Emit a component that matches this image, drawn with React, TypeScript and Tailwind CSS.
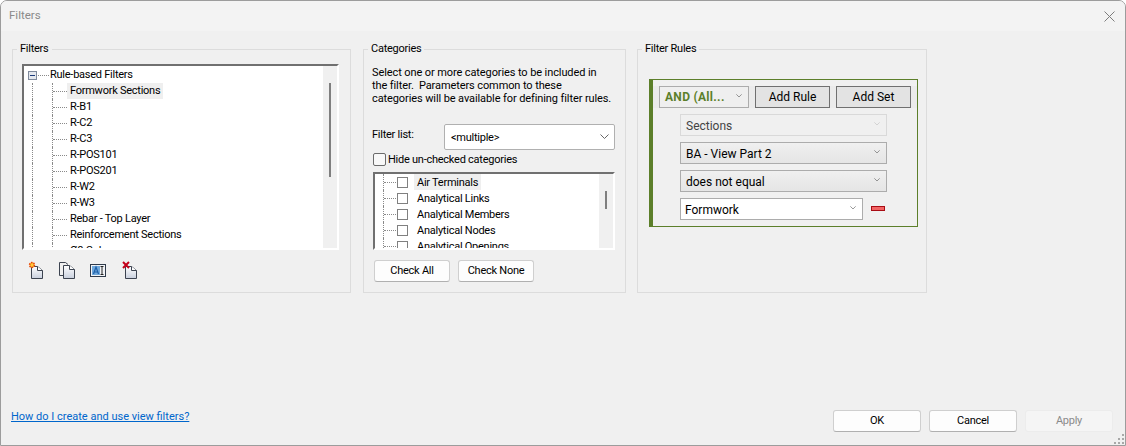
import React from "react";

const FILTERS = ["Formwork Sections", "R-B1", "R-C2", "R-C3", "R-POS101", "R-POS201", "R-W2", "R-W3", "Rebar - Top Layer", "Reinforcement Sections", "Ø8 Colour"];
const CATEGORIES = ["Air Terminals", "Analytical Links", "Analytical Members", "Analytical Nodes", "Analytical Openings"];

function Chevron({ className = "" }: { className?: string }) {
  return (
    <svg viewBox="0 0 9 6" className={className} fill="none" stroke="currentColor">
      <path d="M0.5 0.5 L4.5 4.5 L8.5 0.5" />
    </svg>
  );
}

function Group({ title, className, children }: { title: string; className: string; children: React.ReactNode }) {
  return (
    <fieldset className={`border border-[#dcdcdc] h-[252px] shrink-0 ${className}`}>
      <legend className="ml-[4px] px-[3px] h-4 leading-4">{title}</legend>
      {children}
    </fieldset>
  );
}

function FilterRow({ label, selected }: { label: string; selected?: boolean }) {
  return (
    <div className="flex h-4 shrink-0 pl-[8px]">
      <span className="w-[20px] border-l border-dotted border-[#8a8a8a]" />
      <span className="w-[15px] h-4 border-l border-dotted border-[#8a8a8a] flex items-center">
        <span className="w-[14px] border-t border-dotted border-[#8a8a8a]" />
      </span>
      <span className={`px-[3px] h-4 leading-4 ${selected ? "bg-[#efefef]" : ""}`}>{label}</span>
    </div>
  );
}

function CategoryRow({ label, selected }: { label: string; selected?: boolean }) {
  return (
    <div className="flex h-4 shrink-0 items-center pl-[8px]">
      <span className="h-4 w-[14px] border-l border-dotted border-[#8a8a8a] flex items-center">
        <span className="w-[12px] border-t border-dotted border-[#8a8a8a]" />
      </span>
      <span className="w-[11px] h-[11px] border border-[#808080] bg-white shrink-0" />
      <span className={`ml-[6px] px-[3px] h-4 pt-px leading-4 ${selected ? "bg-[#efefef]" : ""}`}>{label}</span>
    </div>
  );
}

function RuleSelect({ label, disabled }: { label: string; disabled?: boolean }) {
  return (
    <div
      className={`w-[207px] h-[22px] flex items-center justify-between pl-[5px] pr-[6px] border ${
        disabled
          ? "border-[#d9d9d9] text-[#444]"
          : "border-[#acacac] bg-gradient-to-b from-[#f0f0f0] to-[#e5e5e5]"
      }`}
    >
      <span className="pt-[2px]">{label}</span>
      <Chevron className={`w-[6px] h-[4px] mb-[3px] ${disabled ? "text-[#c4c4c4]" : "text-[#666]"}`} />
    </div>
  );
}

function DialogButton({ label, disabled }: { label: string; disabled?: boolean }) {
  return (
    <button
      className={`w-[88px] h-[22px] rounded-[3px] border ${
        disabled ? "border-[#ececec] bg-[#f5f5f5] text-[#8a8a8a]" : "border-[#cfcfcf] border-b-[#b0b0b0] bg-[#fdfdfd]"
      }`}
    >
      {label}
    </button>
  );
}

function PageGradient({ id }: { id: string }) {
  return (
    <defs>
      <linearGradient id={id} x1="0" y1="0" x2="0" y2="1">
        <stop offset="0" stopColor="#ffffff" />
        <stop offset="1" stopColor="#c9d0de" />
      </linearGradient>
    </defs>
  );
}

function NewIcon() {
  return (
    <svg width="16" height="18" viewBox="0 0 16 18">
      <PageGradient id="pg1" />
      <path d="M3.5 5.5 H9.5 L14.5 9.5 V17.5 H3.5 Z" fill="url(#pg1)" stroke="#3c4350" />
      <path d="M9.5 5.5 V9.5 H14.5" fill="#fff" stroke="#3c4350" />
      <circle cx="4" cy="4" r="2.4" fill="#ffc93a" stroke="#ea4a0a" strokeWidth="1.6" strokeDasharray="1.5 0.8" />
    </svg>
  );
}

function CopyIcon() {
  return (
    <svg width="17" height="18" viewBox="0 0 17 18">
      <PageGradient id="pg2" />
      <path d="M5.5 14.5 H1.5 V1.5 H7.5 L10 3.5" fill="none" stroke="#3c4350" />
      <path d="M5.5 4.5 H11.5 L16.5 8.5 V17.5 H5.5 Z" fill="url(#pg2)" stroke="#3c4350" />
      <path d="M11.5 4.5 V8.5 H16.5" fill="#fff" stroke="#3c4350" />
    </svg>
  );
}

function RenameIcon() {
  return (
    <svg width="16" height="13" viewBox="0 0 16 13">
      <rect x="0.5" y="0.5" width="15" height="12" fill="#f2f4f7" stroke="#2f3a4a" />
      <rect x="2" y="2" width="8" height="9" fill="#6fa8dc" />
      <path d="M3.5 10 L6 3 L8.5 10 M4.5 8 H7.5" fill="none" stroke="#1d5fa8" strokeWidth="1.2" />
      <path d="M10.5 2.5 H13.5 M12 2.5 V10.5 M10.5 10.5 H13.5" fill="none" stroke="#222" />
    </svg>
  );
}

function DeleteIcon() {
  return (
    <svg width="16" height="18" viewBox="0 0 16 18">
      <PageGradient id="pg3" />
      <path d="M3.5 5.5 H9.5 L14.5 9.5 V17.5 H3.5 Z" fill="url(#pg3)" stroke="#3c4350" />
      <path d="M9.5 5.5 V9.5 H14.5" fill="#fff" stroke="#3c4350" />
      <path d="M1 1 L7 7 M7 1 L1 7" stroke="#c4001a" strokeWidth="2" />
    </svg>
  );
}

export default function App() {
  return (
    <div className="relative w-[1126px] h-[446px] flex flex-col overflow-hidden bg-[#f0f0f0] border border-[#9c9c9c] rounded-t-[7px] text-[11px] text-black font-['Roboto',sans-serif] tracking-[-0.25px]">
      <div className="h-[30px] shrink-0 bg-[#f3f3f3] flex items-center justify-between pl-[8px] pr-[10px]">
        <span className="text-[#8a8a8a] text-[11.5px] tracking-normal">Filters</span>
        <svg width="11" height="11" viewBox="0 0 11 11" stroke="#7d7d7d" fill="none">
          <path d="M0.5 0.5 L10.5 10.5 M10.5 0.5 L0.5 10.5" />
        </svg>
      </div>

      <div className="flex-1 flex items-start pl-[11px] pt-[10px]">
        <Group title="Filters" className="w-[339px] mr-[12px]">
          <div className="ml-[9px] mr-[11px] mt-[7px] h-[186px] flex border-2 border-[#707070] border-r-white border-b-white bg-white">
            <div className="flex-1 flex flex-col overflow-hidden">
              <div className="flex h-4 shrink-0 items-center pl-[4px] mt-[1px]">
                <span className="w-[9px] h-[9px] border border-[#7f8a9c] bg-[#e4e8ee] flex items-center justify-center">
                  <span className="w-[5px] h-px bg-[#1a3a7a]" />
                </span>
                <span className="w-[11px] ml-px border-t border-dotted border-[#8a8a8a]" />
                <span className="ml-px leading-4">Rule-based Filters</span>
              </div>
              {FILTERS.map((f, i) => (
                <FilterRow key={f} label={f} selected={i === 0} />
              ))}
            </div>
            <div className="w-[14px] bg-[#f0f0f0] pt-[17px] flex justify-center">
              <span className="w-[2px] h-[94px] bg-[#7f7f7f]" />
            </div>
          </div>
          <div className="flex items-center mt-[10px] ml-[15px] h-[20px]">
            <span className="w-[30px]"><NewIcon /></span>
            <span className="w-[32px]"><CopyIcon /></span>
            <span className="w-[32px]"><RenameIcon /></span>
            <DeleteIcon />
          </div>
        </Group>

        <Group title="Categories" className="w-[263px] mr-[11px]">
          <div className="pl-[8px] pt-[9px]">
            <p className="leading-[13px] tracking-[-0.1px] whitespace-nowrap">
              Select one or more categories to be included in
              <br />
              the filter.&nbsp; Parameters common to these
              <br />
              categories will be available for defining filter rules.
            </p>
            <div className="flex items-center mt-[19px]">
              <span className="w-[72px] mb-[4px]">Filter list:</span>
              <div className="w-[171px] h-[26px] bg-white border border-[#b0b0b0] rounded-[2px] flex items-center justify-between pl-[6px] pr-[5px]">
                <span className="pt-[2px]">&lt;multiple&gt;</span>
                <Chevron className="w-[9px] h-[6px] text-[#666]" />
              </div>
            </div>
            <label className="flex items-center mt-[2px] ml-px h-[14px]">
              <span className="w-[13px] h-[13px] rounded-[2px] border border-[#6b6b6b] bg-[#f8f8f8]" />
              <span className="ml-[2px] pt-[2px]">Hide un-checked categories</span>
            </label>
            <div className="h-[78px] mt-[6px] ml-px w-[242px] flex border-2 border-[#707070] border-r-white border-b-white bg-white">
              <div className="flex-1 flex flex-col overflow-hidden">
                {CATEGORIES.map((c, i) => (
                  <CategoryRow key={c} label={c} selected={i === 0} />
                ))}
              </div>
              <div className="w-[14px] bg-[#f0f0f0] pt-[17px] flex justify-center">
                <span className="w-[2px] h-[18px] bg-[#7f7f7f]" />
              </div>
            </div>
            <div className="flex gap-2 mt-[10px] ml-[2px]">
              <button className="w-[76px] h-[22px] rounded-[3px] border border-[#cfcfcf] border-b-[#b0b0b0] bg-[#fdfdfd]">Check All</button>
              <button className="w-[76px] h-[22px] rounded-[3px] border border-[#cfcfcf] border-b-[#b0b0b0] bg-[#fdfdfd]">Check None</button>
            </div>
          </div>
        </Group>

        <Group title="Filter Rules" className="w-[290px]">
          <div className="ml-[11px] mt-[22px] w-[269px] h-[148px] border border-[#5c7f2a] border-l-[4px] pt-[6px] text-[12px] tracking-normal">
            <div className="flex gap-[6px] pl-[6px] pr-[3px] bg-[#ebebeb]">
              <div className="w-[90px] h-[22px] border border-[#acacac] flex items-center justify-between pl-[5px] pr-[6px] bg-[#efefef]">
                <span className="font-bold text-[#5c7f2a] tracking-[0.3px]">AND (All...</span>
                <Chevron className="w-[6px] h-[4px] text-[#666] mb-[3px]" />
              </div>
              <button className="w-[75px] h-[22px] border border-[#707070] bg-[#e3e3e3]">Add Rule</button>
              <button className="w-[75px] h-[22px] border border-[#707070] bg-[#e3e3e3]">Add Set</button>
            </div>
            <div className="flex flex-col gap-[6px] mt-[6px] pl-[27px]">
              <RuleSelect label="Sections" disabled />
              <RuleSelect label="BA - View Part 2" />
              <RuleSelect label="does not equal" />
              <div className="flex items-center">
                <div className="w-[183px] h-[22px] bg-white border border-[#acacac] flex items-center justify-between pl-[4px] pr-[6px]">
                  <span className="pt-[2px]">Formwork</span>
                  <Chevron className="w-[6px] h-[4px] text-[#666] mb-[3px]" />
                </div>
                <span className="ml-[8px] w-[14px] h-[5px] bg-[#f26464] border border-[#a80c14] mb-[1px]" />
              </div>
            </div>
          </div>
        </Group>
      </div>

      <div className="h-[43px] shrink-0 flex items-start justify-between pl-[10px] pr-[12px]">
        <a className="mt-[7px] text-[#0066cc] underline tracking-normal" href="#">How do I create and use view filters?</a>
        <div className="flex gap-2 mt-[8px]">
          <DialogButton label="OK" />
          <DialogButton label="Cancel" />
          <DialogButton label="Apply" disabled />
        </div>
      </div>

      <svg width="11" height="11" viewBox="0 0 11 11" fill="#a8a8a8" className="absolute right-0 bottom-0">
        <rect x="8" y="0" width="2" height="2" />
        <rect x="4" y="4" width="2" height="2" />
        <rect x="8" y="4" width="2" height="2" />
        <rect x="0" y="8" width="2" height="2" />
        <rect x="4" y="8" width="2" height="2" />
        <rect x="8" y="8" width="2" height="2" />
      </svg>
    </div>
  );
}
